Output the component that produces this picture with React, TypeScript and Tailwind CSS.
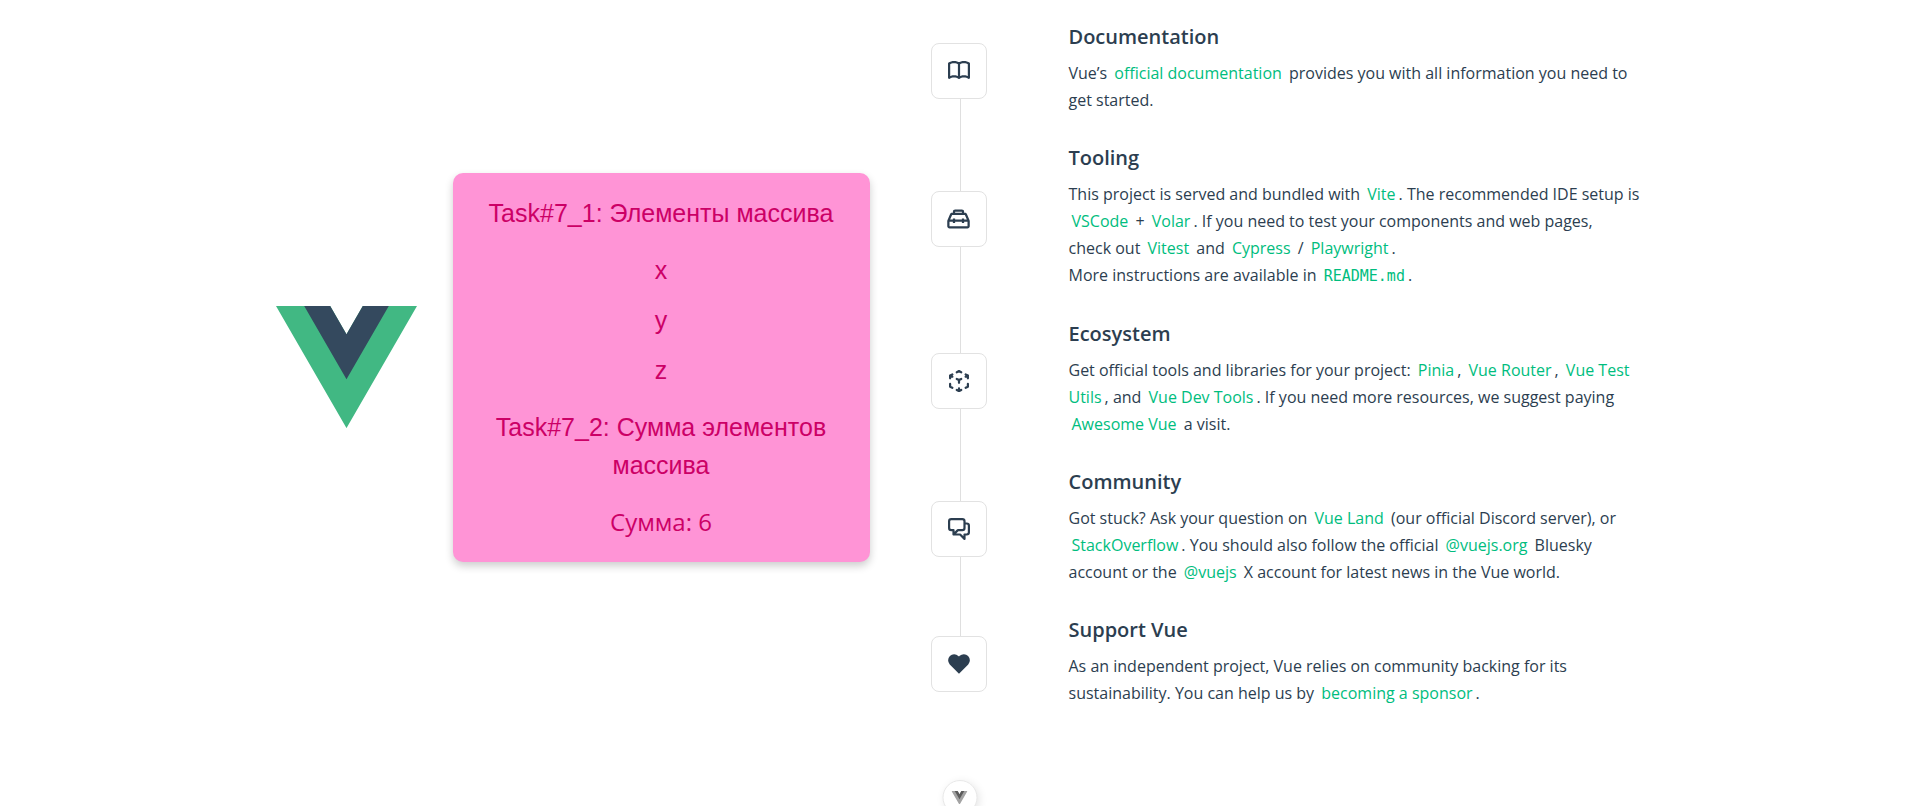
import type { ReactNode } from 'react';

function VueLogo({ className, outer, inner }: { className: string; outer: string; inner: string }) {
  return (
    <svg viewBox="0 0 261.76 226.69" className={className} role="img" aria-label="Vue logo">
      <path d="M161.096.001l-30.225 52.351L100.647.001H-.005l130.877 226.688L261.749.001z" fill={outer} />
      <path d="M161.096.001l-30.225 52.351L100.647.001H52.346l78.526 136.01L209.398.001z" fill={inner} />
    </svg>
  );
}

function Link({ children }: { children: ReactNode }) {
  return (
    <a href="#" className="px-[3px] text-[#00bd7e] transition-colors hover:bg-[#00bd7e]/20">
      {children}
    </a>
  );
}

type ItemProps = { icon: ReactNode; title: string; first?: boolean; last?: boolean; children: ReactNode };

function WelcomeItem({ icon, title, first, last, children }: ItemProps) {
  return (
    <section className="flex gap-[78px]">
      <div className="flex w-[60px] shrink-0 flex-col items-center">
        <div className={first ? 'flex-1' : 'w-px flex-1 bg-[#dfdfdf]'} />
        <div className="flex size-14 items-center justify-center self-start rounded-lg border border-[#e2e2e2] bg-white text-[#2c3e50]">
          {icon}
        </div>
        <div className={last ? 'flex-1' : 'w-px flex-1 bg-[#dfdfdf]'} />
      </div>
      <div className="min-w-0 flex-1 pt-[9px] pb-[17px]">
        <h3 className="mb-[6px] text-[20px] leading-[35px] font-semibold text-[#2c3e50]">{title}</h3>
        <p>{children}</p>
      </div>
    </section>
  );
}

const bookIcon = (
  <svg viewBox="0 0 20 17" className="w-[22px] fill-current" aria-hidden="true">
    <path d="M11 2.253a1 1 0 1 0-2 0h2zm-2 13a1 1 0 1 0 2 0H9zm.447-12.167a1 1 0 1 0 1.107-1.666L9.447 3.086zM1 2.253L.447 1.42A1 1 0 0 0 0 2.253h1zm0 13H0a1 1 0 0 0 1.553.833L1 15.253zm8.447.833a1 1 0 1 0 1.107-1.666l-1.107 1.666zm0-14.666a1 1 0 1 0 1.107 1.666L9.447 1.42zM19 2.253h1a1 1 0 0 0-.447-.833L19 2.253zm0 13l-.553.833A1 1 0 0 0 20 15.253h-1zm-9.553-.833a1 1 0 1 0 1.107 1.666L9.447 14.42zM9 2.253v13h2v-13H9zm1.553-.833C9.203.523 7.42 0 5.5 0v2c1.572 0 2.961.431 3.947 1.086l1.107-1.666zM5.5 0C3.58 0 1.797.523.447 1.42l1.107 1.666C2.539 2.431 3.928 2 5.5 2V0zM0 2.253v13h2v-13H0zm1.553 13.833C2.539 15.431 3.928 15 5.5 15v-2c-1.92 0-3.703.523-5.053 1.42l1.107 1.666zM5.5 15c1.572 0 2.961.431 3.947 1.086l1.107-1.666C9.203 13.523 7.42 13 5.5 13v2zm5.053-11.914C11.539 2.431 12.928 2 14.5 2V0c-1.92 0-3.703.523-5.053 1.42l1.107 1.666zM14.5 2c1.573 0 2.961.431 3.947 1.086l1.107-1.666C18.203.523 16.421 0 14.5 0v2zm3.5.253v13h2v-13h-2zm1.553 12.167C18.203 13.523 16.421 13 14.5 13v2c1.573 0 2.961.431 3.947 1.086l1.107-1.666zM14.5 13c-1.92 0-3.703.523-5.053 1.42l1.107 1.666C11.539 15.431 12.928 15 14.5 15v-2z" />
  </svg>
);

const toolboxIcon = (
  <svg viewBox="0 0 24 24" className="w-[27px] fill-current" aria-hidden="true">
    <path d="M20 18v-4h-3v1h-2v-1H9v1H7v-1H4v4h16M6.33 8l-1.74 4H7v-1h2v1h6v-1h2v1h2.41l-1.74-4H6.33M9 5v1h6V5H9m12.84 7.61c.1.22.16.48.16.8V18c0 .53-.21 1-.6 1.41-.4.4-.85.59-1.4.59H4c-.55 0-1-.19-1.4-.59C2.21 19 2 18.53 2 18v-4.59c0-.32.06-.58.16-.8L4.5 7.22C4.84 6.41 5.45 6 6.33 6H7V5c0-.55.18-1 .57-1.41C7.96 3.2 8.44 3 9 3h6c.56 0 1.04.2 1.43.59.39.41.57.86.57 1.41v1h.67c.88 0 1.49.41 1.83 1.22l2.34 5.39z" />
  </svg>
);

const ecosystemIcon = (
  <svg viewBox="0 0 18 20" className="w-5 fill-current" aria-hidden="true">
    <path d="M11.447 8.894a1 1 0 1 0-.894-1.789l.894 1.789zm-2.894-.789a1 1 0 1 0 .894 1.789l-.894-1.789zm0 1.789a1 1 0 1 0 .894-1.789l-.894 1.789zM7.447 7.106a1 1 0 1 0-.894 1.789l.894-1.789zM10 9a1 1 0 1 0-2 0h2zm-2 2.5a1 1 0 1 0 2 0H8zm9.447-5.606a1 1 0 1 0-.894-1.789l.894 1.789zm-2.894-.789a1 1 0 1 0 .894 1.789l-.894-1.789zm2 .789a1 1 0 1 0 .894-1.789l-.894 1.789zm-1.106-2.789a1 1 0 1 0-.894 1.789l.894-1.789zM18 5a1 1 0 1 0-2 0h2zm-2 2.5a1 1 0 1 0 2 0h-2zm-5.447-4.606a1 1 0 1 0 .894-1.789l-.894 1.789zM9 1l.447-.894a1 1 0 0 0-.894 0L9 1zm-2.447.106a1 1 0 1 0 .894 1.789l-.894-1.789zm-6 3a1 1 0 1 0 .894 1.789L.553 4.106zm2.894.789a1 1 0 1 0-.894-1.789l.894 1.789zm-2-.789a1 1 0 1 0-.894 1.789l.894-1.789zm1.106 2.789a1 1 0 1 0 .894-1.789l-.894 1.789zM2 5a1 1 0 1 0-2 0h2zM0 7.5a1 1 0 1 0 2 0H0zm8.553 12.394a1 1 0 1 0 .894-1.789l-.894 1.789zm-1.106-2.789a1 1 0 1 0-.894 1.789l.894-1.789zm1.106 1a1 1 0 1 0 .894 1.789l-.894-1.789zm2.894.789a1 1 0 1 0-.894-1.789l.894 1.789zM8 19a1 1 0 1 0 2 0H8zm2-2.5a1 1 0 1 0-2 0h2zm-7.447.394a1 1 0 1 0 .894-1.789l-.894 1.789zM1 15H0a1 1 0 0 0 .553.894L1 15zm1-2.5a1 1 0 1 0-2 0h2zm12.553 2.606a1 1 0 1 0 .894 1.789l-.894-1.789zM17 15l.447.894A1 1 0 0 0 18 15h-1zm1-2.5a1 1 0 1 0-2 0h2zm-7.447-5.394l-2 1 .894 1.789 2-1-.894-1.789zm-1.106 1l-2-1-.894 1.789 2 1 .894-1.789zM8 9v2.5h2V9H8zm8.553-4.894l-2 1 .894 1.789 2-1-.894-1.789zm.894 0l-2-1-.894 1.789 2 1 .894-1.789zM16 5v2.5h2V5h-2zm-4.553-3.894l-2-1-.894 1.789 2 1 .894-1.789zm-2.894-1l-2 1 .894 1.789 2-1L8.553.106zM1.447 5.894l2-1-.894-1.789-2 1 .894 1.789zm-.894 0l2 1 .894-1.789-2-1-.894 1.789zM0 5v2.5h2V5H0zm9.447 13.106l-2-1-.894 1.789 2 1 .894-1.789zm0 1.789l2-1-.894-1.789-2 1 .894 1.789zM10 19v-2.5H8V19h2zm-6.553-3.894l-2-1-.894 1.789 2 1 .894-1.789zM2 15v-2.5H0V15h2zm13.447 1.894l2-1-.894-1.789-2 1 .894 1.789zM18 15v-2.5h-2V15h2z" />
  </svg>
);

const communityIcon = (
  <svg viewBox="0 0 20 20" className="w-[22px] fill-current" aria-hidden="true">
    <path d="M15 4a1 1 0 1 0 0 2V4zm0 11v-1a1 1 0 0 0-1 1h1zm0 4l-.707.707A1 1 0 0 0 16 19h-1zm-4-4l.707-.707A1 1 0 0 0 11 14v1zm-4.707-1.293a1 1 0 0 0-1.414 1.414l1.414-1.414zm-.707.707l-.707-.707.707.707zM9 11v-1a1 1 0 0 0-.707.293L9 11zm-4 0h1a1 1 0 0 0-1-1v1zm0 4H4a1 1 0 0 0 1.707.707L5 15zm10-9h2V4h-2v2zm2 0a1 1 0 0 1 1 1h2a3 3 0 0 0-3-3v2zm1 1v6h2V7h-2zm0 6a1 1 0 0 1-1 1v2a3 3 0 0 0 3-3h-2zm-1 1h-2v2h2v-2zm-3 1v4h2v-4h-2zm1.707 3.293l-4-4-1.414 1.414 4 4 1.414-1.414zM11 14H7v2h4v-2zm-4 0c-.276 0-.525-.111-.707-.293l-1.414 1.414C5.42 15.663 6.172 16 7 16v-2zm-.707 1.121l3.414-3.414-1.414-1.414-3.414 3.414 1.414 1.414zM9 12h4v-2H9v2zm4 0a3 3 0 0 0 3-3h-2a1 1 0 0 1-1 1v2zm3-3V3h-2v6h2zm0-6a3 3 0 0 0-3-3v2a1 1 0 0 1 1 1h2zm-3-3H3v2h10V0zM3 0a3 3 0 0 0-3 3h2a1 1 0 0 1 1-1V0zM0 3v6h2V3H0zm0 6a3 3 0 0 0 3 3v-2a1 1 0 0 1-1-1H0zm3 3h2v-2H3v2zm1-1v4h2v-4H4zm1.707 4.707l.586-.586-1.414-1.414-.586.586 1.414 1.414z" />
  </svg>
);

const supportIcon = (
  <svg viewBox="0 0 20 20" className="w-[22px] fill-current" aria-hidden="true">
    <path d="M10 3.22l-.61-.6a5.5 5.5 0 0 0-7.666.105 5.5 5.5 0 0 0-.114 7.665L10 18.78l8.39-8.4a5.5 5.5 0 0 0-.114-7.665 5.5 5.5 0 0 0-7.666-.105l-.61.61z" />
  </svg>
);

const arrayItems = ['x', 'y', 'z'];

export default function App() {
  return (
    <div className="min-h-screen bg-white font-['Open_Sans',sans-serif] text-base leading-[27px] text-[#2c3e50]">
      <div className="mx-auto grid max-w-[1440px] grid-cols-2 items-center px-9 pt-2.5">
        <header className="flex items-center gap-9 pr-[90px]">
          <VueLogo className="w-[141px] shrink-0" outer="#41b883" inner="#34495e" />
          <div className="flex-1 rounded-[10px] bg-[#ff94d6] px-[22px] py-[21px] text-center font-['Liberation_Sans',sans-serif] text-[25px] leading-[38px] text-[#cc0066] shadow-[0_4px_8px_rgba(0,0,0,0.2)]">
            <h1>Task#7_1: Элементы массива</h1>
            <ul className="my-[19px] flex flex-col gap-3">
              {arrayItems.map((item) => (
                <li key={item}>{item}</li>
              ))}
            </ul>
            <h1>Task#7_2: Сумма элементов массива</h1>
            <p className="mt-[19px] font-['Open_Sans',sans-serif] text-[24px] leading-[38px]">Сумма: 6</p>
          </div>
        </header>

        <main className="-ml-[29px]">
          <WelcomeItem icon={bookIcon} title="Documentation" first>
            Vue’s <Link>official documentation</Link> provides you with all information you need to get started.
          </WelcomeItem>
          <WelcomeItem icon={toolboxIcon} title="Tooling">
            This project is served and bundled with <Link>Vite</Link>. The recommended IDE setup is{' '}
            <Link>VSCode</Link> + <Link>Volar</Link>. If you need to test your components and web pages, check&nbsp;out{' '}
            <Link>Vitest</Link> and <Link>Cypress</Link> / <Link>Playwright</Link>.
            <br />
            More instructions are available in{' '}
            <Link>
              <code className="font-['DejaVu_Sans_Mono',monospace] text-[15px]">README.md</code>
            </Link>
            .
          </WelcomeItem>
          <WelcomeItem icon={ecosystemIcon} title="Ecosystem">
            Get official tools and libraries for your project: <Link>Pinia</Link>, <Link>Vue Router</Link>,{' '}
            <Link>Vue Test Utils</Link>, and <Link>Vue Dev Tools</Link>. If you need more resources, we suggest paying{' '}
            <Link>Awesome Vue</Link> a visit.
          </WelcomeItem>
          <WelcomeItem icon={communityIcon} title="Community">
            Got stuck? Ask your question on <Link>Vue Land</Link> (our official Discord server), or{' '}
            <Link>StackOverflow</Link>. You should also follow the official <Link>@vuejs.org</Link> Bluesky account or
            the <Link>@vuejs</Link> X account for latest news in the Vue world.
          </WelcomeItem>
          <WelcomeItem icon={supportIcon} title="Support Vue" last>
            As an independent project, Vue relies on community backing for its sustainability. You can help us by{' '}
            <Link>becoming a sponsor</Link>.
          </WelcomeItem>
        </main>
      </div>

      <button
        type="button"
        aria-label="Toggle devtools panel"
        className="fixed -bottom-[9px] left-1/2 flex size-[35px] -translate-x-1/2 items-center justify-center rounded-full border border-[#e8e8e8] bg-white shadow-[2px_2px_8px_rgba(0,0,0,0.1)]"
      >
        <VueLogo className="w-4" outer="#a3a3a3" inner="#5c5c5c" />
      </button>
    </div>
  );
}
